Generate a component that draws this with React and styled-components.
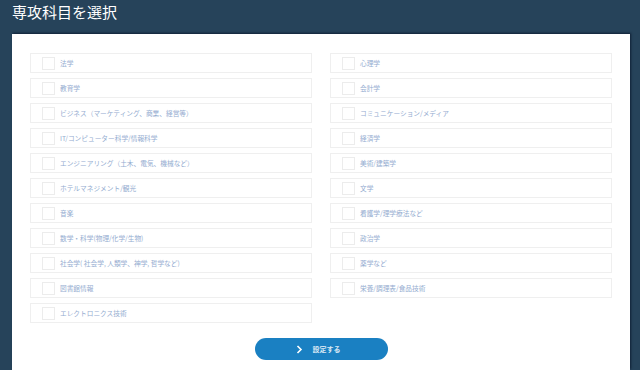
import styled, { createGlobalStyle } from "styled-components"
import { useState } from "react"

const Global = createGlobalStyle`
    html, body {
        margin: 0;
        padding: 0;
        background: #26435a;
        font-family: "Liberation Serif", "Noto Sans CJK JP", serif;
    }
`

const Page = styled.div`
    width: 640px;
    height: 370px;
    overflow: hidden;
    background: #26435a;
    display: flex;
    flex-direction: column;
`

const Title = styled.h1`
    margin: 0;
    height: 34px;
    padding: 2px 12px 0;
    box-sizing: border-box;
    color: #ffffff;
    font-size: 15px;
    font-weight: normal;
    line-height: 19px;
    font-family: "Noto Sans CJK JP", serif;
`

const Panel = styled.div`
    margin: 0 10px 0 12px;
    flex: 1;
    background: #ffffff;
    box-shadow: 1px -1px 2px rgba(0, 10, 30, 0.6);
    padding: 19px 18px 0 18px;
    display: flex;
    flex-direction: column;
    align-items: center;
`

const Columns = styled.div`
    align-self: stretch;
    display: grid;
    grid-template-columns: 1fr 1fr;
    gap: 18px;
`

const Column = styled.div`
    display: flex;
    flex-direction: column;
    gap: 5px;
`

const Option = styled.label`
    height: 20px;
    box-sizing: border-box;
    border: 1px solid #efefef;
    display: flex;
    align-items: center;
    padding-left: 11px;
    gap: 5px;
    cursor: pointer;
`

const Box = styled.span`
    width: 13px;
    height: 13px;
    box-sizing: border-box;
    border: 1px solid #ececec;
    background: ${p => (p.$on ? "#1b80c3" : "#ffffff")};
`

const Label = styled.span`
    font-family: "Noto Sans CJK JP", serif;
    font-size: 6.7px;
    line-height: 1;
    color: #94acd0;
    white-space: nowrap;
`

const Submit = styled.button`
    margin-top: 15px;
    width: 133px;
    height: 22px;
    border: none;
    border-radius: 11px;
    background: #1a80c2;
    color: #ffffff;
    display: flex;
    align-items: center;
    justify-content: center;
    gap: 10px;
    padding: 0 6px 0 0;
    cursor: pointer;
`

const Text = styled.span`
    font-family: "Noto Sans CJK JP", sans-serif;
    font-size: 7px;
    font-weight: bold;
    color: #dbe9f5;
`

const left = [
    "法学",
    "教育学",
    "ビジネス（マーケティング、商業、経営等）",
    "IT/コンピューター科学/情報科学",
    "エンジニアリング（土木、電気、機械など）",
    "ホテルマネジメント/観光",
    "音楽",
    "数学・科学(物理/化学/生物)",
    "社会学( 社会学, 人類学、神学, 哲学など)",
    "図書館情報",
    "エレクトロニクス技術",
]

const right = [
    "心理学",
    "会計学",
    "コミュニケーション/メディア",
    "経済学",
    "美術/建築学",
    "文学",
    "看護学/理学療法など",
    "政治学",
    "薬学など",
    "栄養/調理表/食品技術",
]

function App() {
    const [picked, setPicked] = useState({})

    const toggle = (name) => {
        setPicked({ ...picked, [name]: !picked[name] })
    }

    const renderList = (list) => list.map((name) => (
        <Option key={name} onClick={() => toggle(name)}>
            <Box $on={picked[name]} />
            <Label>{name}</Label>
        </Option>
    ))

    return (
        <Page>
            <Global />
            <Title>専攻科目を選択</Title>
            <Panel>
                <Columns>
                    <Column>{renderList(left)}</Column>
                    <Column>{renderList(right)}</Column>
                </Columns>
                <Submit>
                    <svg width="7" height="9" viewBox="0 0 7 9">
                        <path d="M1.5 1 L5 4.5 L1.5 8" fill="none" stroke="#ffffff" strokeWidth="1.6" />
                    </svg>
                    <Text>設定する</Text>
                </Submit>
            </Panel>
        </Page>
    )
}

export default App
